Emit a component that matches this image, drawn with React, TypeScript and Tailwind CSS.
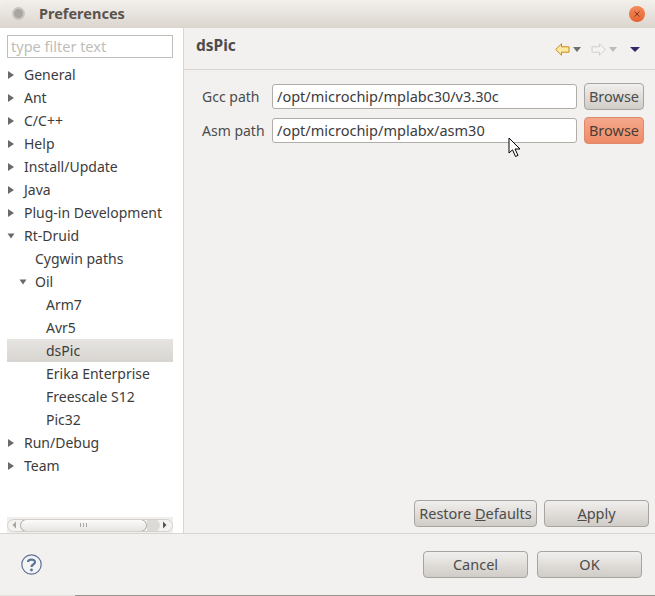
const font = { fontFamily: '"Noto Sans", sans-serif' };

function Arrow({ open }: { open?: boolean }) {
  return (
    <svg width="8" height="8" viewBox="0 0 8 8" className="shrink-0">
      {open ? <path d="M0.5 1.5 L7.5 1.5 L4 6.5 Z" fill="#6a6a68" /> : <path d="M1 0 L7 4 L1 8 Z" fill="#6a6a68" />}
    </svg>
  );
}

const rows: { t: string; d: number; a?: "o" | "c"; s?: boolean }[] = [
  { t: "General", d: 0, a: "c" },
  { t: "Ant", d: 0, a: "c" },
  { t: "C/C++", d: 0, a: "c" },
  { t: "Help", d: 0, a: "c" },
  { t: "Install/Update", d: 0, a: "c" },
  { t: "Java", d: 0, a: "c" },
  { t: "Plug-in Development", d: 0, a: "c" },
  { t: "Rt-Druid", d: 0, a: "o" },
  { t: "Cygwin paths", d: 1 },
  { t: "Oil", d: 1, a: "o" },
  { t: "Arm7", d: 2 },
  { t: "Avr5", d: 2 },
  { t: "dsPic", d: 2, s: true },
  { t: "Erika Enterprise", d: 2 },
  { t: "Freescale S12", d: 2 },
  { t: "Pic32", d: 2 },
  { t: "Run/Debug", d: 0, a: "c" },
  { t: "Team", d: 0, a: "c" },
];

function Btn({ children, w, hot }: { children: React.ReactNode; w: string; hot?: boolean }) {
  return (
    <div
      className={`${w} h-[27px] rounded-[4px] border flex items-center justify-center text-[14.5px] ${
        hot
          ? "border-[#e08a6c] bg-gradient-to-b from-[#f5a98c] to-[#ee8a66] text-[#4a3d38]"
          : "border-[#a8a49f] bg-gradient-to-b from-[#f1efed] to-[#d0ccc7] text-[#4c4c4c]"
      }`}
    >
      {children}
    </div>
  );
}

function Field({ label, value, hot }: { label: string; value: string; hot?: boolean }) {
  return (
    <div className="flex items-center h-[27px]">
      <div className="w-[70px] text-[14px] text-[#4c4c4c]">{label}</div>
      <div className="w-[305px] h-[25px] bg-white border border-[#b0ada8] rounded-[3px] pl-[4px] flex items-center text-[14.5px] text-[#3c3c3c]">
        {value}
      </div>
      <div className="ml-[7px]">
        <Btn w="w-[60px]" hot={hot}>Browse</Btn>
      </div>
    </div>
  );
}

export default function App() {
  return (
    <div style={font} className="relative w-[655px] h-[596px] overflow-hidden bg-[#f2f1f0] flex flex-col">
      <div className="h-[28px] shrink-0 rounded-t-[6px] bg-gradient-to-b from-[#f3f0ec] to-[#dbd5ce] flex items-center pl-[12px] pr-[10px] pb-[1px]">
        <div className="w-[13px] h-[13px] rounded-full bg-[#a8a5a0] border-2 border-[#c8c5c0]" />
        <div className="ml-[14px] text-[14.5px] font-bold text-[#5a534c]">Preferences</div>
        <div className="ml-auto w-[16px] h-[16px] rounded-full bg-gradient-to-b from-[#f58a5c] to-[#e4622c] flex items-center justify-center">
          <svg width="8" height="8" viewBox="0 0 8 8"><path d="M1.5 1.5 L6.5 6.5 M6.5 1.5 L1.5 6.5" stroke="#7a3a20" strokeWidth="1" /></svg>
        </div>
      </div>

      <div className="flex h-[506px] shrink-0 border-b border-[#d8d5d2]">
        <div className="w-[184px] shrink-0 bg-white border-r border-[#d8d5d2] pt-[7px] pl-[7px] pr-[10px] flex flex-col">
          <div className="h-[23px] border border-[#c2bfba] pl-[3px] flex items-center text-[14.5px] text-[#c0bdb8]">type filter text</div>
          <div className="mt-[5px] flex-1">
            {rows.map((r) => (
              <div key={r.t} className={`h-[23px] flex items-center text-[14px] text-[#3c3c3c] ${r.s ? "bg-gradient-to-b from-[#e6e4e1] to-[#d8d5d1]" : ""}`}>
                <div className={r.d === 0 ? "w-[17px]" : r.d === 1 ? "w-[28px] pl-[12px]" : "w-[39px]"}>
                  {r.a && <Arrow open={r.a === "o"} />}
                </div>
                {r.t}
              </div>
            ))}
          </div>
          <div className="h-[16px] bg-[#f0efed] flex items-center">
            <div className="w-[166px] h-[13px] rounded-full border border-[#d4d1cd] bg-[#f4f3f2] flex items-center relative overflow-hidden">
              <div className="absolute left-[4px]"><svg width="5" height="8" viewBox="0 0 5 8"><path d="M4 0.5 L0.5 4 L4 7.5 Z" fill="#a8a5a1" /></svg></div>
              <div className="ml-[12px] w-[127px] h-[13px] shrink-0 rounded-full border border-[#aaa69f] bg-gradient-to-b from-[#fbfbfa] to-[#e7e5e2] flex items-center justify-center gap-[2px]">
                <span className="w-px h-[4px] bg-[#a8a5a1]" /><span className="w-px h-[4px] bg-[#a8a5a1]" /><span className="w-px h-[4px] bg-[#a8a5a1]" />
              </div>
              <div className="w-[13px] h-[13px] shrink-0 bg-[#dcdad7] rounded-r-full" />
              <div className="absolute right-[5px]"><svg width="5" height="8" viewBox="0 0 5 8"><path d="M1 0.5 L4.5 4 L1 7.5 Z" fill="#555" /></svg></div>
            </div>
          </div>
        </div>

        <div className="flex-1 flex flex-col">
          <div className="h-[42px] shrink-0 border-b border-[#d8d5d2] flex items-center pl-[12px] pr-[15px]">
            <div className="text-[15.5px] font-bold text-[#4c4c4c] mt-[-6px]">dsPic</div>
            <div className="ml-auto flex items-center mt-[2px]">
              <svg width="15" height="13" viewBox="0 0 15 13"><path d="M0.7 6.5 L6.5 0.8 V3.8 H14 V9.2 H6.5 V12.2 Z" fill="#fbe9a8" stroke="#c98a14" /></svg>
              <svg width="8" height="5" viewBox="0 0 8 5" className="ml-[3px]"><path d="M0 0 H8 L4 5 Z" fill="#6f6f6d" /></svg>
              <svg width="15" height="13" viewBox="0 0 15 13" className="ml-[10px]"><path d="M14.3 6.5 L8.5 0.8 V3.8 H1 V9.2 H8.5 V12.2 Z" fill="#f4f3f2" stroke="#d0cfcc" /></svg>
              <svg width="8" height="5" viewBox="0 0 8 5" className="ml-[3px]"><path d="M0 0 H8 L4 5 Z" fill="#bdbcb9" /></svg>
              <svg width="10" height="5" viewBox="0 0 10 5" className="ml-[13px]"><path d="M0 0 H10 L5 5 Z" fill="#2f2a66" /></svg>
            </div>
          </div>
          <div className="pt-[13px] pl-[18px] flex flex-col gap-[7px]">
            <Field label="Gcc path" value="/opt/microchip/mplabc30/v3.30c" />
            <Field label="Asm path" value="/opt/microchip/mplabx/asm30" hot />
          </div>
          <div className="mt-auto flex justify-end gap-[7px] pr-[6px] pb-[6px]">
            <Btn w="w-[123px]"><span>Restore <u>D</u>efaults</span></Btn>
            <Btn w="w-[105px]"><span><u>A</u>pply</span></Btn>
          </div>
        </div>
      </div>

      <div className="flex-1 flex items-center pl-[21px] pr-[13px]">
        <svg width="21" height="21" viewBox="0 0 21 21">
          <circle cx="10.5" cy="10.5" r="9.7" fill="#f4f4f5" stroke="#5b7299" strokeWidth="1.2" />
          <path d="M7 8 C7 5 14 4.6 14 8 C14 10.6 10.5 10.4 10.5 13" fill="none" stroke="#5b7299" strokeWidth="2.2" />
          <circle cx="10.5" cy="16" r="1.4" fill="#5b7299" />
        </svg>
        <div className="ml-auto flex gap-[9px]">
          <Btn w="w-[105px]">Cancel</Btn>
          <Btn w="w-[105px]">OK</Btn>
        </div>
      </div>
      <div className="h-[1px] shrink-0 flex">
        <div className="w-[75px] bg-[#e4e2df]" />
        <div className="flex-1 bg-[#9a968f]" />
      </div>

      <svg width="14" height="21" viewBox="0 0 14 21" className="absolute left-[508px] top-[137px]">
        <path d="M1 1 V16 L4.5 12.8 L7.5 19.5 L10 18.4 L7 12 H12 Z" fill="#fff" stroke="#000" strokeWidth="1" />
      </svg>
    </div>
  );
}
